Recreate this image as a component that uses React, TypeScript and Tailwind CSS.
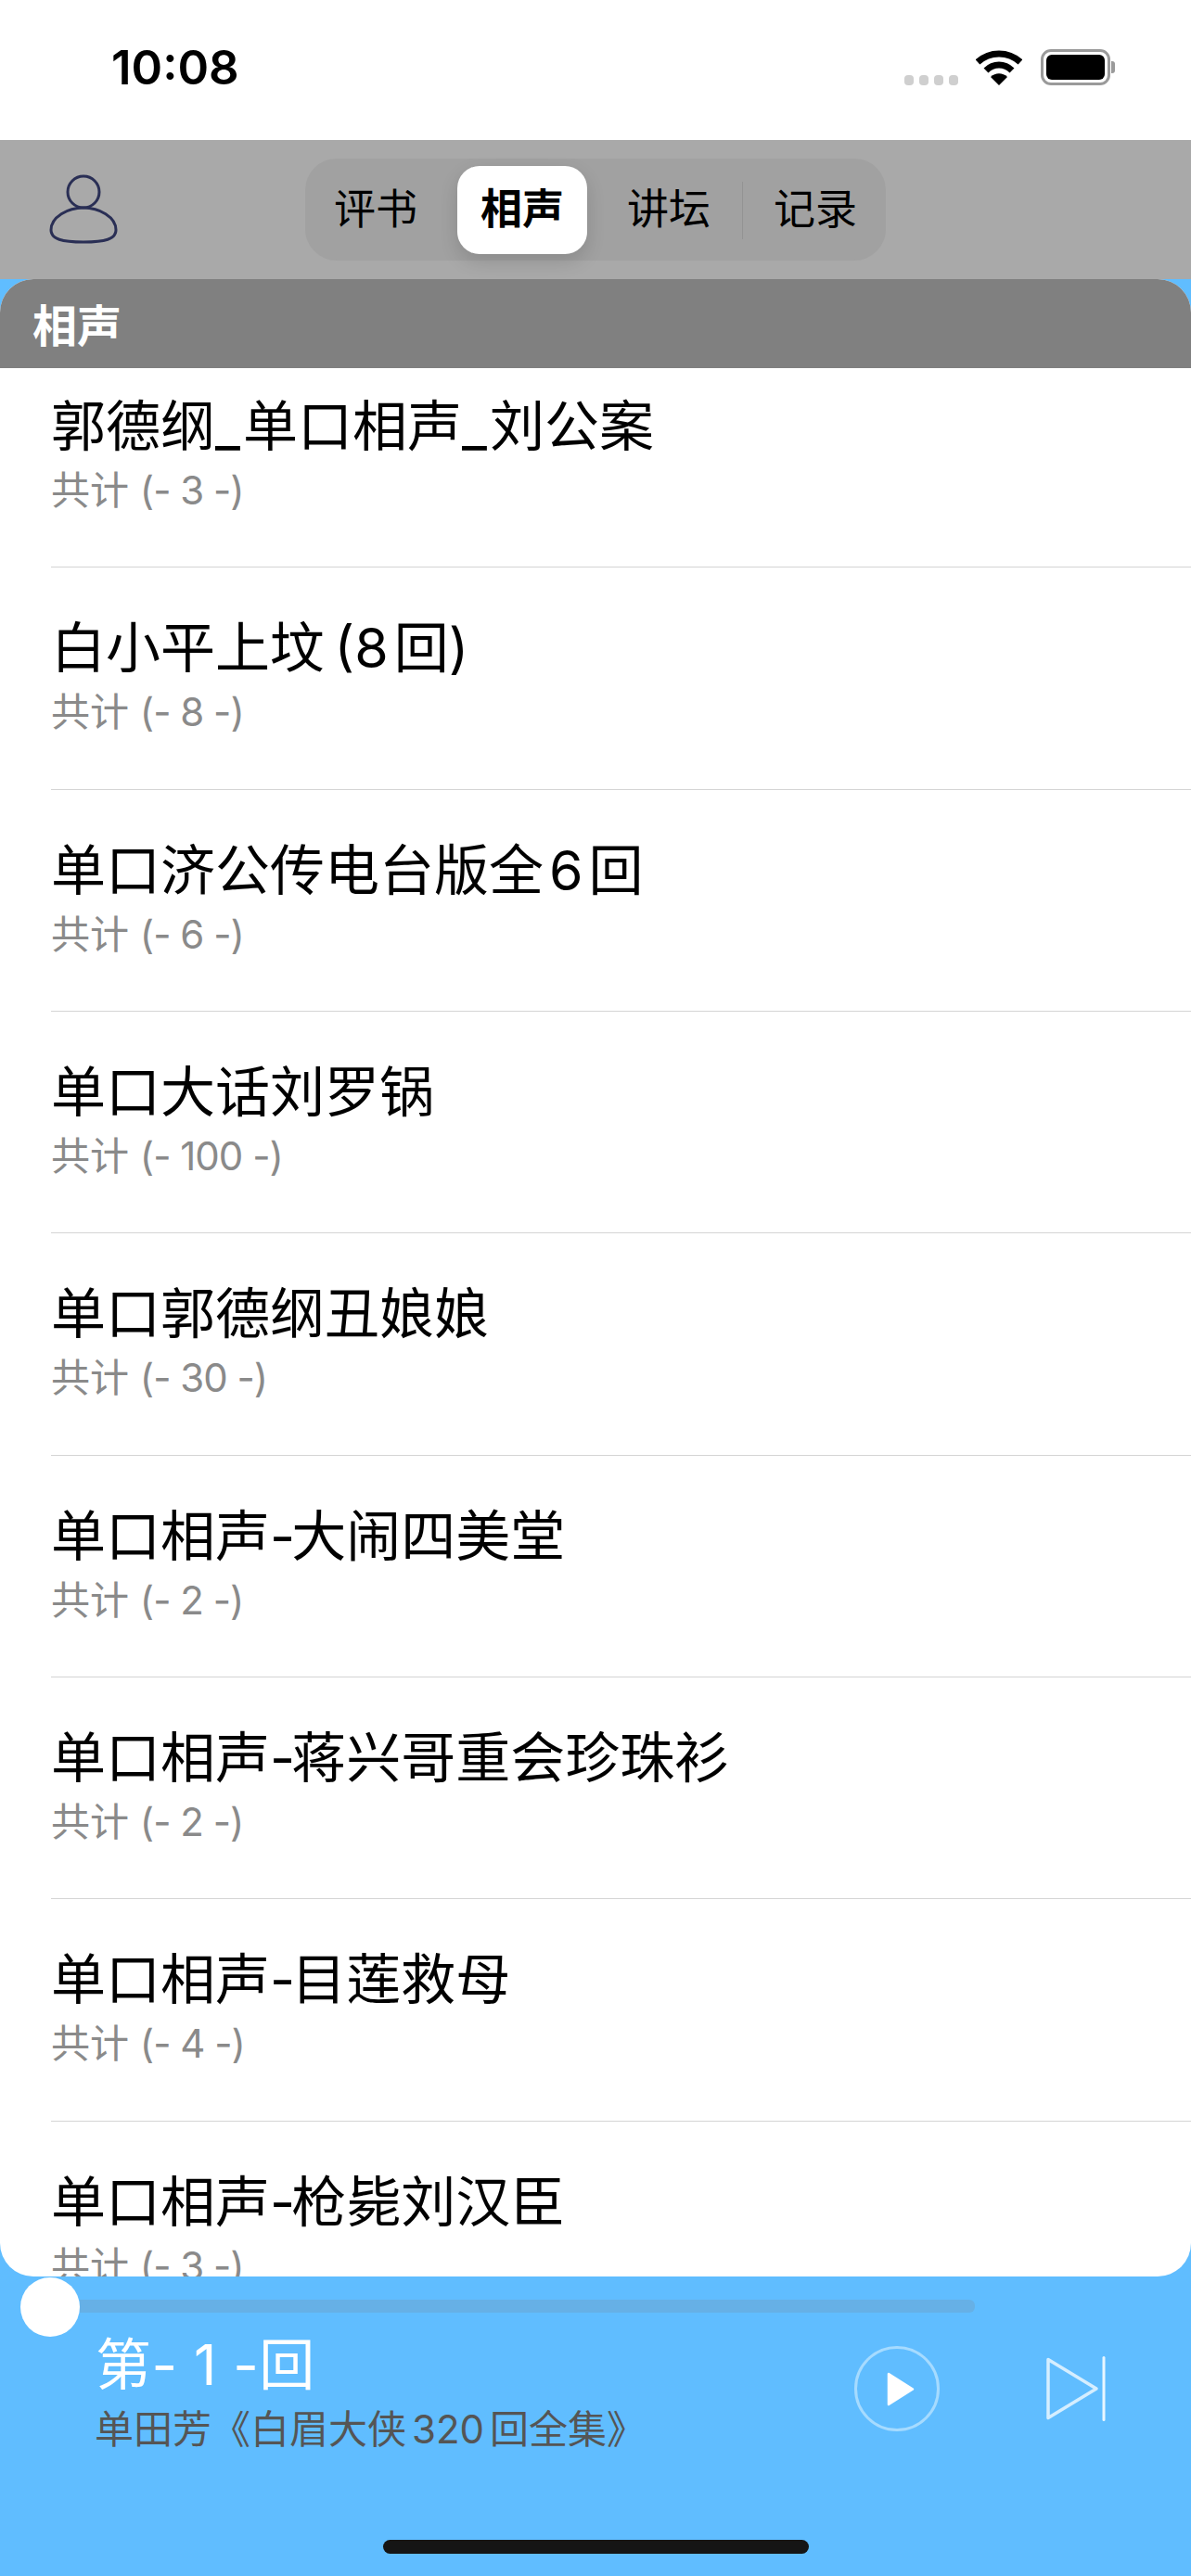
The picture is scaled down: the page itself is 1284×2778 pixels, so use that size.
import React from 'react';

const albums = [
  { title: '郭德纲_单口相声_刘公案', count: 3 },
  { title: '白小平上坟 (8回)', count: 8 },
  { title: '单口济公传电台版全6回', count: 6 },
  { title: '单口大话刘罗锅', count: 100 },
  { title: '单口郭德纲丑娘娘', count: 30 },
  { title: '单口相声-大闹四美堂', count: 2 },
  { title: '单口相声-蒋兴哥重会珍珠衫', count: 2 },
  { title: '单口相声-目莲救母', count: 4 },
  { title: '单口相声-枪毙刘汉臣', count: 3 },
];

const tabs = ['评书', '相声', '讲坛', '记录'];

const spaced = (text: string) =>
  text.split(/([-_ ]|\d+)/).map((part, i, parts) => {
    if (part === '-') return <span key={i} className="tracking-[-4px]">-</span>;
    if (part === '_') return <span key={i} className="tracking-[3px]">_</span>;
    if (part === ' ') return <span key={i} className="tracking-[-6px]"> </span>;
    if (/^\d+$/.test(part)) {
      return <span key={i} className={parts[i - 1].endsWith('(') ? 'mr-[6px]' : 'mx-[6px]'}>{part}</span>;
    }
    return part;
  });

const StatusBar = () => (
  <div className="flex h-[151px] items-start justify-between bg-white pl-[120px] pr-[82px]">
    <span className="mt-[42px] text-[51px] font-semibold leading-[62px] text-black">10:08</span>
    <div className="mt-[53px] flex items-start">
      <div className="mt-[28px] flex gap-[6px]">
        {[0, 1, 2, 3].map((i) => (
          <span key={i} className="h-[11px] w-[10px] rounded-[4px] bg-[#cfcfcf]" />
        ))}
      </div>
      <svg className="ml-[19px] mt-[1px]" width="50" height="38" viewBox="0 0 50 38">
        <path d="M2 13 C15 1 35 1 48 13" fill="none" stroke="#000" strokeWidth="7" />
        <path d="M11 22 C19 14 31 14 39 22" fill="none" stroke="#000" strokeWidth="7" />
        <path d="M16 29 C21 24 29 24 34 29 L25 38 Z" fill="#000" />
      </svg>
      <div className="ml-[20px] flex items-center">
        <div className="h-[39px] w-[75px] rounded-[11px] border-[3px] border-[#9a9a9a] p-[3px]">
          <div className="h-full w-full rounded-[6px] bg-black" />
        </div>
        <div className="ml-[1px] h-[13px] w-[4px] rounded-r-[3px] bg-[#9a9a9a]" />
      </div>
    </div>
  </div>
);

const NavBar = () => (
  <div className="grid h-[150px] grid-cols-[1fr_auto_1fr] items-center bg-[#a9a9a9]">
    <div className="pl-[53px]">
      <svg width="74" height="76" viewBox="0 0 74 76" fill="none" stroke="#2a2f55" strokeWidth="3">
        <circle cx="37" cy="19" r="17" />
        <path d="M37 36 C20 36 2 46 2 60 C2 70 14 73 37 73 C60 73 72 70 72 60 C72 46 54 36 37 36 Z" />
      </svg>
    </div>
    <div className="flex h-[110px] w-[626px] items-center gap-[18px] rounded-[34px] bg-[#a1a1a1] pl-[6px]">
      {tabs.map((tab, i) => (
        <div
          key={tab}
          className={
            i === 1
              ? 'flex h-[95px] w-[140px] items-center justify-center rounded-[24px] bg-white text-[45px] font-semibold text-black shadow-[0_8px_20px_rgba(0,0,0,0.14)]'
              : 'relative flex h-[95px] w-[140px] items-center justify-center text-[45px] text-black'
          }
        >
          {tab}
          {i === 3 && <span className="absolute left-[-9px] top-[17px] h-[62px] w-px bg-[#939393]" />}
        </div>
      ))}
    </div>
    <div />
  </div>
);

const AlbumRow = ({ title, count }: { title: string; count: number }) => (
  <div className="h-[239.33px] pl-[55px]">
    <div className="h-full border-b border-[#d4d4d4] pt-[51px]">
      <p className="text-[59px] leading-[72px] text-black">{spaced(title)}</p>
      <p className="mt-[8px] text-[42px] leading-[50px] text-[#8a8a8a]">
        共计 <span className="tracking-[-1px]">(- {count} -)</span>
      </p>
    </div>
  </div>
);

const Player = () => (
  <div className="relative h-[323px] shrink-0">
    <div className="absolute left-[22px] top-px h-[64px] w-[64px] rounded-full bg-white" />
    <div className="ml-[86px] mt-[25px] h-[14px] w-[965px] rounded-r-[6px] bg-[#66b0e6]" />
    <div className="flex items-start justify-between pl-[102px] pr-[92px] pt-[21px]">
      <div>
        <p className="pl-px text-[60px] leading-[70px] tracking-[0.5px] text-white">第- 1 -回</p>
        <p className="mt-[10px] text-[42px] leading-[50px] text-[#555555]">{spaced('单田芳《白眉大侠320回全集》')}</p>
      </div>
      <div className="flex items-center pt-[15px]">
        <div className="flex h-[92px] w-[92px] items-center justify-center rounded-full border-[3px] border-[#a6dbff]">
          <svg className="ml-[7px]" width="30" height="37" viewBox="0 0 30 37">
            <path d="M2 2 L28 18.5 L2 35 Z" fill="#fff" stroke="#fff" strokeWidth="2.5" strokeLinejoin="round" />
          </svg>
        </div>
        <svg className="ml-[115px]" width="64" height="70" viewBox="0 0 64 70" fill="none">
          <path d="M2 3.5 L54 35 L2 66.5 Z" stroke="#d5eeff" strokeWidth="3.5" strokeLinejoin="round" />
          <path d="M62 1.5 L62 68.5" stroke="#e8f6ff" strokeWidth="3" strokeLinecap="round" />
        </svg>
      </div>
    </div>
    <div className="absolute bottom-[24px] left-[413px] h-[15px] w-[459px] rounded-full bg-[#151515]" />
  </div>
);

export default function App() {
  return (
    <div
      lang="zh-CN"
      className="flex h-[2778px] w-[1284px] flex-col overflow-hidden bg-[#60bdff] font-['Inter','Noto_Sans_CJK_SC',sans-serif]"
    >
      <StatusBar />
      <NavBar />
      <div className="flex min-h-0 flex-1 flex-col overflow-hidden rounded-[36px] bg-white">
        <div className="relative z-10 flex h-[96px] shrink-0 items-center bg-[#808080] pl-[35px] pt-[6px] text-[48px] font-semibold text-white">
          相声
        </div>
        <div className="mt-[-24px]">
          {albums.map((a) => (
            <AlbumRow key={a.title} title={a.title} count={a.count} />
          ))}
        </div>
      </div>
      <Player />
    </div>
  );
}
